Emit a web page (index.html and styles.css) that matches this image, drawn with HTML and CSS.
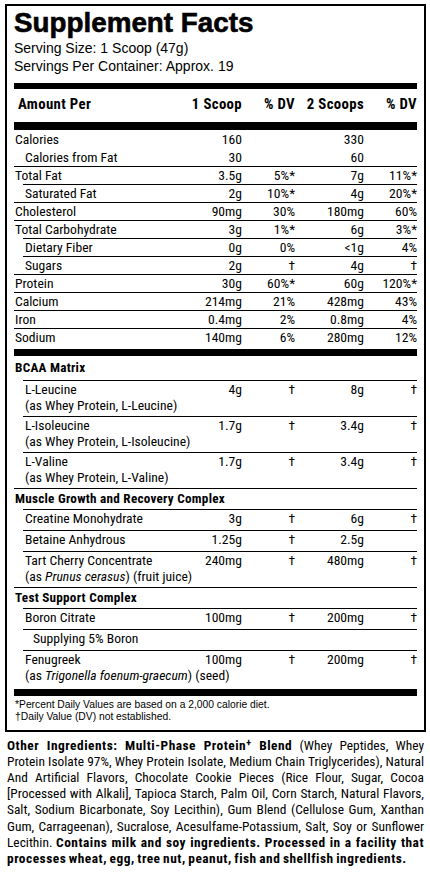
FILE: index.html
```html
<!DOCTYPE html>
<html lang="en">
<head>
    <meta charset="UTF-8">
    <meta name="viewport" content="width=device-width, initial-scale=1.0">
    <title>Supplement Facts</title>
    <link rel="stylesheet" href="styles.css">
</head>
<body>
    <div class="label">
        <h1 class="title">Supplement Facts</h1>
        <p class="serving">Serving Size: 1 Scoop (47g)<br>Servings Per Container: Approx. 19</p>
        <div class="bar"></div>

        <div class="facts">
            <div class="row head">
                <span class="name">Amount Per</span>
                <span>1 Scoop</span>
                <span>% DV</span>
                <span>2 Scoops</span>
                <span>% DV</span>
            </div>
            <div class="bar bar-thick"></div>

            <div class="row plain"><span class="name">Calories</span><span>160</span><span></span><span>330</span><span></span></div>
            <div class="row sub plain"><span class="name">Calories from Fat</span><span>30</span><span></span><span>60</span><span></span></div>
            <div class="row"><span class="name">Total Fat</span><span>3.5g</span><span>5%*</span><span>7g</span><span>11%*</span></div>
            <div class="row sub"><span class="name">Saturated Fat</span><span>2g</span><span>10%*</span><span>4g</span><span>20%*</span></div>
            <div class="row"><span class="name">Cholesterol</span><span>90mg</span><span>30%</span><span>180mg</span><span>60%</span></div>
            <div class="row"><span class="name">Total Carbohydrate</span><span>3g</span><span>1%*</span><span>6g</span><span>3%*</span></div>
            <div class="row sub"><span class="name">Dietary Fiber</span><span>0g</span><span>0%</span><span>&lt;1g</span><span>4%</span></div>
            <div class="row sub"><span class="name">Sugars</span><span>2g</span><span>†</span><span>4g</span><span>†</span></div>
            <div class="row"><span class="name">Protein</span><span>30g</span><span>60%*</span><span>60g</span><span>120%*</span></div>
            <div class="row"><span class="name">Calcium</span><span>214mg</span><span>21%</span><span>428mg</span><span>43%</span></div>
            <div class="row"><span class="name">Iron</span><span>0.4mg</span><span>2%</span><span>0.8mg</span><span>4%</span></div>
            <div class="row"><span class="name">Sodium</span><span>140mg</span><span>6%</span><span>280mg</span><span>12%</span></div>

            <div class="bar bar-thick gap"></div>

            <div class="section">
                <div class="sec-head">BCAA Matrix</div>
                <div class="row sub">
                    <span class="name">L-Leucine</span><span>4g</span><span>†</span><span>8g</span><span>†</span>
                    <span class="note">(as Whey Protein, L-Leucine)</span>
                </div>
                <div class="row sub">
                    <span class="name">L-Isoleucine</span><span>1.7g</span><span>†</span><span>3.4g</span><span>†</span>
                    <span class="note">(as Whey Protein, L-Isoleucine)</span>
                </div>
                <div class="row sub">
                    <span class="name">L-Valine</span><span>1.7g</span><span>†</span><span>3.4g</span><span>†</span>
                    <span class="note">(as Whey Protein, L-Valine)</span>
                </div>
            </div>

            <div class="section">
                <div class="sec-head ruled">Muscle Growth and Recovery Complex</div>
                <div class="row sub"><span class="name">Creatine Monohydrate</span><span>3g</span><span>†</span><span>6g</span><span>†</span></div>
                <div class="row sub"><span class="name">Betaine Anhydrous</span><span>1.25g</span><span>†</span><span>2.5g</span><span></span></div>
                <div class="row sub">
                    <span class="name">Tart Cherry Concentrate</span><span>240mg</span><span>†</span><span>480mg</span><span>†</span>
                    <span class="note">(as <i>Prunus cerasus</i>) (fruit juice)</span>
                </div>
            </div>

            <div class="section">
                <div class="sec-head ruled">Test Support Complex</div>
                <div class="row sub"><span class="name">Boron Citrate</span><span>100mg</span><span>†</span><span>200mg</span><span>†</span></div>
                <div class="row sub deep"><span class="name">Supplying 5% Boron</span><span></span><span></span><span></span><span></span></div>
                <div class="row sub">
                    <span class="name">Fenugreek</span><span>100mg</span><span>†</span><span>200mg</span><span>†</span>
                    <span class="note">(as <i>Trigonella foenum-graecum</i>) (seed)</span>
                </div>
            </div>

            <div class="bar bar-thick gap"></div>
        </div>

        <p class="footnote">*Percent Daily Values are based on a 2,000 calorie diet.<br>†Daily Value (DV) not established.</p>
    </div>

    <p class="ingredients">
        <span class="line"><b>Other Ingredients: Multi-Phase Protein<sup>+</sup> Blend</b> (Whey Peptides, Whey</span>
        <span class="line">Protein Isolate 97%, Whey Protein Isolate, Medium Chain Triglycerides), Natural</span>
        <span class="line">And Artificial Flavors, Chocolate Cookie Pieces (Rice Flour, Sugar, Cocoa</span>
        <span class="line">[Processed with Alkali], Tapioca Starch, Palm Oil, Corn Starch, Natural Flavors,</span>
        <span class="line">Salt, Sodium Bicarbonate, Soy Lecithin), Gum Blend (Cellulose Gum, Xanthan</span>
        <span class="line">Gum, Carrageenan), Sucralose, Acesulfame-Potassium, Salt, Soy or Sunflower</span>
        <span class="line">Lecithin. <b>Contains milk and soy ingredients. Processed in a facility that</b></span>
        <span class="line last"><b>processes wheat, egg, tree nut, peanut, fish and shellfish ingredients.</b></span>
    </p>
</body>
</html>
```

FILE: styles.css
```css
* {
    margin: 0;
    padding: 0;
    box-sizing: border-box;
}

body {
    background: #fff;
    color: #000;
    font-family: 'Liberation Sans', Arial, sans-serif;
}

.label {
    margin: 4px 4px 0 5px;
    border: 2px solid #000;
    padding: 1.5px 7px 7px;
}

.title {
    font-size: 27.8px;
    line-height: 30px;
    font-weight: 700;
    -webkit-text-stroke: 0.6px #000;
}

.serving {
    font-size: 14px;
    line-height: 18px;
    margin-top: 1.5px;
}

.bar {
    height: 6px;
    margin-top: 8px;
    background: #000;
}

.bar-thick {
    height: 8px;
    margin-top: 0;
}

.bar-thick.gap {
    height: 7px;
    margin-top: 3px;
}

/* condensed table text */
.facts {
    font-family: 'Roboto Condensed', 'Roboto', sans-serif;
    font-stretch: condensed;
    font-size: 13.6px;
}

.row {
    display: grid;
    grid-template-columns: minmax(0, 1fr) 60px 53px 69px 53px;
    line-height: 17px;
    border-top: 1px solid #000;
    text-align: right;
}

.row .name {
    text-align: left;
    padding-left: 1px;
    white-space: nowrap;
}

.row.sub {
    margin-left: 9px;
}

.row.sub .name {
    padding-left: 2px;
}

.row.deep .name {
    padding-left: 10px;
}

.row.plain {
    border-top-color: transparent;
}

.row.head {
    border-top: 0;
    font-weight: 700;
    font-size: 14.8px;
    letter-spacing: 0.35px;
    line-height: 19px;
    padding: 6px 0 8px;
}

.row.head .name {
    padding-left: 4px;
}

.sec-head {
    font-weight: 700;
    font-size: 13.2px;
    letter-spacing: 0.25px;
    line-height: 17px;
    padding: 3px 0 4px 1px;
}

.sec-head.ruled {
    border-top: 1px solid #000;
    padding-top: 1px;
    padding-bottom: 2px;
}

.section .row {
    padding-bottom: 3px;
}

.note {
    grid-column: 1 / -1;
    text-align: left;
    line-height: 15px;
    padding-left: 2px;
    white-space: nowrap;
}

.footnote {
    font-size: 10.3px;
    line-height: 12px;
    padding: 2.5px 0 0 1px;
}

.ingredients {
    margin: 6px 6px 0 7px;
    font-family: 'Roboto Condensed', 'Roboto', sans-serif;
    font-stretch: condensed;
    font-size: 13.4px;
    line-height: 16.2px;
}

.ingredients .line {
    display: block;
    white-space: nowrap;
    word-spacing: -1px;
    text-align: justify;
    text-align-last: justify;
}

.ingredients .line.last {
    text-align-last: left;
}

.ingredients b {
    letter-spacing: 0.5px;
}

.ingredients sup {
    font-size: 10px;
    line-height: 0;
    vertical-align: 4px;
}
```
